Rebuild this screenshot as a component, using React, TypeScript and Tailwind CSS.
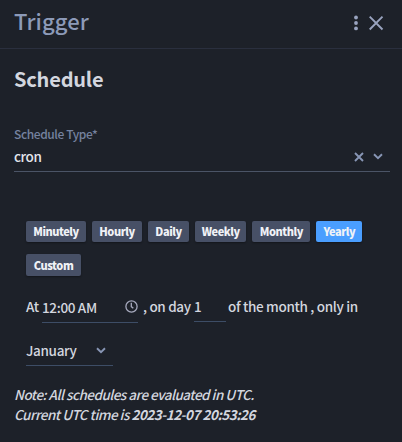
import type { ReactNode } from "react";

const frequencies = [
  { label: "Minutely", size: "w-[60px]" },
  { label: "Hourly", size: "w-[50px]" },
  { label: "Daily", size: "w-[41px]" },
  { label: "Weekly", size: "w-[51.4px]" },
  { label: "Monthly", size: "w-[58px]" },
  { label: "Yearly", size: "w-[46px]", active: true },
  { label: "Custom", size: "w-[55px]" },
];

function Chevron() {
  return (
    <svg width="10" height="7" viewBox="0 0 10 7" fill="none" stroke="#8896b5" strokeWidth="1.9">
      <path d="M1 1.2 5 5.1 9 1.2" />
    </svg>
  );
}

function Words({ className, children }: { className: string; children: ReactNode }) {
  return <span className={`block shrink-0 whitespace-pre leading-5 ${className}`}>{children}</span>;
}

export default function App() {
  return (
    <div className="h-[442px] w-[402px] overflow-hidden bg-[#1d2129] font-['Noto_Sans_CJK_SC',sans-serif] text-[13.5px] font-medium text-[#d3d6df]">
      <header className="flex h-[49px] items-start justify-between border-b border-[#2a2f3e] pl-[14px] pr-[18px]">
        <h1 className="mt-[4px] text-[22px] font-medium leading-8 tracking-[0.1px] text-[#8c9ab8]">Trigger</h1>
        <div className="mt-[15px] flex items-center gap-[9px]">
          <svg width="6" height="16" viewBox="0 0 6 16" fill="#99a3bf">
            <circle cx="3" cy="2.5" r="1.9" />
            <circle cx="3" cy="8" r="1.9" />
            <circle cx="3" cy="13.4" r="1.9" />
          </svg>
          <svg width="16" height="16" viewBox="0 0 16 16" fill="none" stroke="#99a3bf" strokeWidth="1.9">
            <path d="M1.7 1.7 14.5 14.5M14.5 1.7 1.7 14.5" />
          </svg>
        </div>
      </header>

      <h2 className="ml-[14px] mt-[14px] h-[33px] text-[20px] font-bold leading-8 tracking-[-0.2px] text-[#d3d6df]">Schedule</h2>

      <section className="ml-[14px] mt-[29px] h-[47px] w-[376px] border-b border-[#4b5466]">
        <div className="text-[12px] leading-[18px] tracking-[-0.4px] text-[#75829f]">Schedule Type*</div>
        <div className="flex items-center">
          <Words className="mt-[3px] flex-1 tracking-[-0.4px] text-[#e4e6ec]">cron</Words>
          <svg className="mr-[9px] mt-[4px]" width="10" height="10" viewBox="0 0 10 10" fill="none" stroke="#8896b5" strokeWidth="1.9">
            <path d="m1 1 8 8M9 1 1 9" />
          </svg>
          <div className="mr-[7px] mt-[4px]"><Chevron /></div>
        </div>
      </section>

      <div className="ml-[26px] mt-[49px] flex w-[360px] flex-wrap gap-x-[6px] gap-y-3">
        {frequencies.map((f) => (
          <button
            key={f.label}
            className={`h-[21px] whitespace-nowrap rounded-[2px] text-[11px] font-black leading-[21px] tracking-[-0.45px] text-[#f0f2f6] shadow-[0_1px_2px_rgba(0,0,0,0.35)] last:h-[22px] ${f.size} ${f.active ? "bg-[#4a9eff]" : "bg-[#475066]"}`}
          >
            {f.label}
          </button>
        ))}
      </div>

      <div className="ml-[26px] mt-[20px] flex h-[27px] items-start tracking-[-0.33px]">
        <Words className="w-[16px]">At</Words>
        <div className="flex h-[27px] w-[96px] items-start justify-between border-b border-[#3d4d66]">
          <Words className="mt-px">12:00 AM</Words>
          <svg className="mt-[4px]" width="13" height="13" viewBox="0 0 13 13" fill="none" stroke="#a6a9bd" strokeWidth="1.3">
            <circle cx="6.5" cy="6.5" r="5.6" />
            <path d="M6.3 2.8V6.6L8.3 8.3" />
          </svg>
        </div>
        <Words className="ml-[5px] w-[51px]">, on day</Words>
        <div className="h-[26px] w-[32px] border-b border-[#3d4d66]"><Words className="">1</Words></div>
        <Words className="ml-[2px]">of the month , only in</Words>
      </div>

      <div className="ml-[26px] mt-[17px] flex h-[26px] w-[87px] items-start justify-between border-b border-[#3d4d66] pr-[7px] tracking-[-0.33px]">
        <Words className="">January</Words>
        <div className="mt-[7px]"><Chevron /></div>
      </div>

      <div className="ml-[14px] mt-[18px] italic tracking-[-0.52px]">
        <Words className="">Note: All schedules are evaluated in UTC.</Words>
        <Words className="">Current UTC time is <strong className="font-bold">2023-12-07 20:53:26</strong></Words>
      </div>
    </div>
  );
}
